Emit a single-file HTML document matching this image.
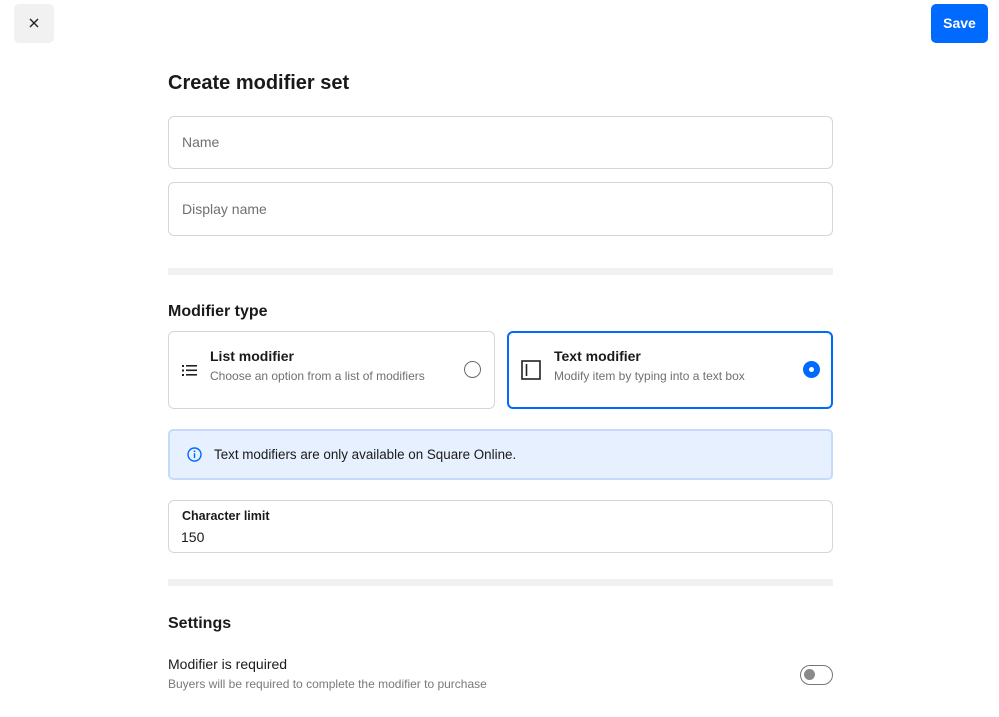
<!DOCTYPE html>
<html><head><style>
*{box-sizing:border-box;margin:0;padding:0}
body{width:999px;height:717px;background:#fff;font-family:"Liberation Sans",sans-serif;position:relative;overflow:hidden;color:#1a1a1a}
.a{position:absolute}
.field{position:absolute;left:168px;width:665px;border:1px solid #d6d6d6;border-radius:6px}
.ph{position:absolute;left:13px;font-size:14px;color:#707070}
.div{position:absolute;left:168px;width:665px;height:7px;background:#f1f1f1}
h2{position:absolute;left:168px;font-size:16px;font-weight:bold}
.card{position:absolute;top:331px;height:78px;border-radius:6px}
.t{position:absolute;font-size:14px;font-weight:bold;top:16px}
.s{position:absolute;font-size:12px;color:#707070;top:37px}
</style></head><body>
<div class="a" style="left:14px;top:4px;width:40px;height:39px;background:#f1f1f1;border-radius:5px"></div>
<svg class="a" style="left:28px;top:17px" width="12" height="12" viewBox="0 0 12 12"><path d="M2 2L10 10M10 2L2 10" stroke="#222" stroke-width="1.4"/></svg>
<div class="a" style="left:931px;top:4px;width:57px;height:39px;background:#006aff;border-radius:5px;color:#fff;font-weight:bold;font-size:14px;text-align:center;line-height:39px">Save</div>
<div class="a" style="left:168px;top:72px;font-size:20px;font-weight:bold">Create modifier set</div>
<div class="field" style="top:116px;height:53px"><span class="ph" style="top:17px">Name</span></div>
<div class="field" style="top:182px;height:54px"><span class="ph" style="top:18px">Display name</span></div>
<div class="div" style="top:268px"></div>
<h2 style="top:303px">Modifier type</h2>
<div class="card" style="left:168px;width:327px;border:1px solid #d6d6d6">
<svg class="a" style="left:13px;top:32px" width="16" height="13" viewBox="0 0 16 13"><g fill="#222"><rect x="0" y="1" width="2" height="2"/><rect x="0" y="5.5" width="2" height="2"/><rect x="0" y="10" width="2" height="2"/><rect x="4" y="1" width="11" height="1.6"/><rect x="4" y="5.5" width="11" height="1.6"/><rect x="4" y="10" width="11" height="1.6"/></g></svg>
<div class="t" style="left:41px">List modifier</div><div class="s" style="left:41px">Choose an option from a list of modifiers</div>
<div class="a" style="left:295px;top:29px;width:17px;height:17px;border:1.5px solid #6b6b6b;border-radius:50%"></div></div>
<div class="card" style="left:507px;width:326px;border:2px solid #006aff">
<svg class="a" style="left:12px;top:27px" width="20" height="20" viewBox="0 0 20 20"><rect x="1" y="1" width="18" height="18" fill="none" stroke="#222" stroke-width="1.6"/><path d="M5.5 4v12" stroke="#222" stroke-width="1.6"/></svg>
<div class="t" style="left:45px;top:15px">Text modifier</div><div class="s" style="left:45px;top:36px">Modify item by typing into a text box</div>
<div class="a" style="left:294px;top:28px;width:17px;height:17px;background:#006aff;border-radius:50%"><div class="a" style="left:6px;top:6px;width:5px;height:5px;background:#fff;border-radius:50%"></div></div></div>
<div class="a" style="left:168px;top:429px;width:665px;height:51px;background:#e6f0fe;border:2px solid #c5dbfb;border-radius:5px">
<svg class="a" style="left:17px;top:16px" width="15" height="15" viewBox="0 0 15 15"><circle cx="7.5" cy="7.5" r="6.5" fill="none" stroke="#006aff" stroke-width="1.4"/><rect x="6.8" y="6.2" width="1.4" height="4.8" fill="#006aff"/><circle cx="7.5" cy="4.3" r="0.9" fill="#006aff"/></svg>
<div class="a" style="left:44px;top:16px;font-size:13.4px">Text modifiers are only available on Square Online.</div></div>
<div class="field" style="top:500px;height:53px"><div class="a" style="left:13px;top:8px;font-size:12.5px;font-weight:bold">Character limit</div><div class="a" style="left:12px;top:28px;font-size:14px">150</div></div>
<div class="div" style="top:579px"></div>
<h2 style="top:615px">Settings</h2>
<div class="a" style="left:168px;top:656px;font-size:14px">Modifier is required</div>
<div class="a" style="left:168px;top:677px;font-size:12px;color:#7a7a7a">Buyers will be required to complete the modifier to purchase</div>
<div class="a" style="left:800px;top:665px;width:33px;height:20px;border:1.5px solid #777;border-radius:10px"><div class="a" style="left:3px;top:3px;width:11px;height:11px;background:#8a8a8a;border-radius:50%"></div></div>
</body></html>
